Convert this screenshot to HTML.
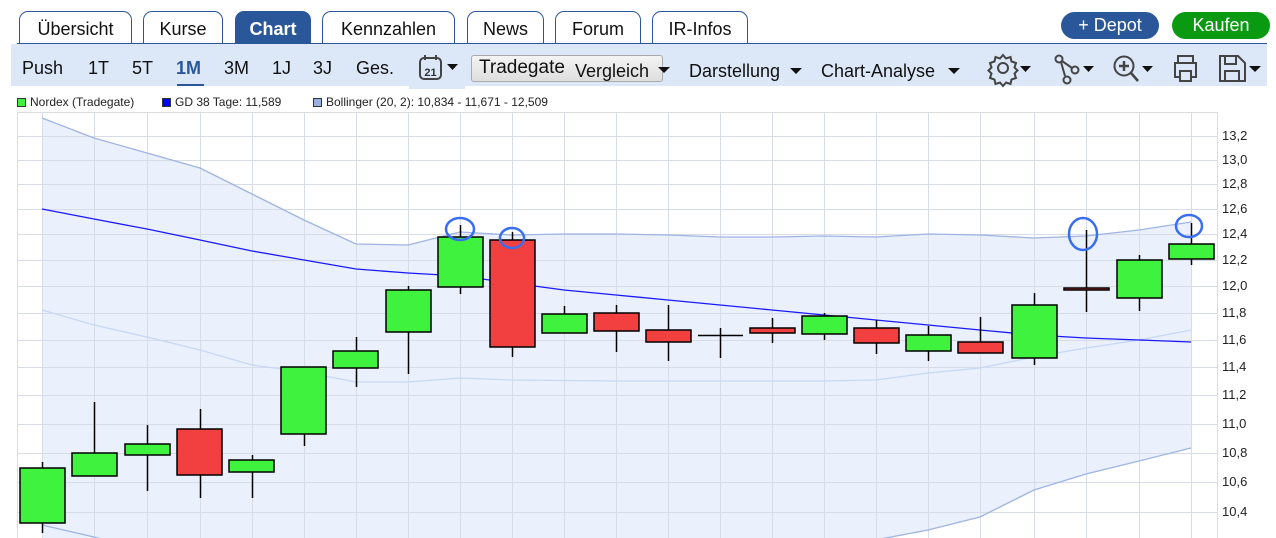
<!DOCTYPE html>
<html><head><meta charset="utf-8"><style>
*{margin:0;padding:0;box-sizing:border-box}
body{width:1276px;height:538px;overflow:hidden;background:#fff;font-family:"Liberation Sans",sans-serif;position:relative;color:#111}
.tab{position:absolute;top:11px;height:33px;border:1px solid #2a579a;border-bottom:none;border-radius:9px 9px 0 0;background:#fff;font-size:18px;text-align:center;line-height:34px}
.tab.act{background:#2a579a;color:#fff;font-weight:bold}
.line{position:absolute;left:17px;right:9px;top:43px;height:1px;background:#2a579a}
.bar{position:absolute;left:11px;right:9px;top:44px;height:42px;background:#dce8f8}
.t{position:absolute;top:58px;font-size:18px}
.btn{position:absolute;top:12px;height:27px;border-radius:14px;color:#fff;font-size:18px;text-align:center;line-height:27px}
.leg{position:absolute;top:95px;font-size:12px;color:#222}
.sq{display:inline-block;width:9px;height:9px;border:1px solid #333;margin-right:4px;vertical-align:-1px}
.ax{position:absolute;left:1222px;font-size:13px;color:#222}
</style></head><body>
<div class="tab" style="left:19px;width:113px">Übersicht</div>
<div class="tab" style="left:143px;width:80px">Kurse</div>
<div class="tab act" style="left:235px;width:76px">Chart</div>
<div class="tab" style="left:322px;width:133px">Kennzahlen</div>
<div class="tab" style="left:467px;width:77px">News</div>
<div class="tab" style="left:555px;width:86px">Forum</div>
<div class="tab" style="left:652px;width:96px">IR-Infos</div>
<div class="btn" style="left:1061px;width:98px;background:#2a579a">+ Depot</div>
<div class="btn" style="left:1172px;width:98px;background:#0a9a12">Kaufen</div>
<div class="line"></div>
<div class="bar"></div>
<div style="position:absolute;left:409px;top:86px;width:56px;height:3px;background:#dce8f8"></div>
<div class="t" style="left:22px">Push</div>
<div class="t" style="left:88px">1T</div>
<div class="t" style="left:132px">5T</div>
<div class="t" style="left:176px;font-weight:bold;color:#2a579a">1M</div>
<div style="position:absolute;left:177px;top:84px;width:27px;height:2px;background:#2a579a"></div>
<div class="t" style="left:224px">3M</div>
<div class="t" style="left:272px">1J</div>
<div class="t" style="left:313px">3J</div>
<div class="t" style="left:356px">Ges.</div>
<svg style="position:absolute;left:418px;top:54px" width="46" height="28"><rect x="2" y="4" width="21" height="21" rx="4" fill="none" stroke="#444" stroke-width="2"/><line x1="7" y1="1" x2="7" y2="6" stroke="#444" stroke-width="2"/><line x1="18" y1="1" x2="18" y2="6" stroke="#444" stroke-width="2"/><text x="12.5" y="22" font-size="11" font-weight="bold" text-anchor="middle" fill="#333" font-family="Liberation Sans">21</text><path d="M29 10h11l-5.5 6z" fill="#111"/></svg>
<div style="position:absolute;left:471px;top:55px;width:192px;height:27px;border:1px solid #aaa;border-radius:3px;background:linear-gradient(#f4f4f4,#dedede)"></div>
<div class="t" style="left:479px;top:57px;font-size:19px">Tradegate</div>
<div class="t" style="left:575px;top:61px;font-size:18px">Vergleich</div>
<svg style="position:absolute;left:657px;top:66px" width="14" height="8"><path d="M1 1h12l-6 6z" fill="#111"/></svg>
<div class="t" style="left:689px;top:61px">Darstellung</div>
<svg style="position:absolute;left:789px;top:67px" width="14" height="8"><path d="M1 1h12l-6 6z" fill="#111"/></svg>
<div class="t" style="left:821px;top:61px">Chart-Analyse</div>
<svg style="position:absolute;left:947px;top:67px" width="14" height="8"><path d="M1 1h12l-6 6z" fill="#111"/></svg>
<svg style="position:absolute;left:0;top:0" width="1276" height="100" fill="none" stroke="#444" stroke-width="2">
<circle cx="1003" cy="68" r="5"/>
<path d="M1003 55l3 3.5 4.5-1.5 1 4.5 4.5 1.5-1.5 4.5 3 3-3 3 1.5 4.5-4.5 1.5-1 4.5-4.5-1.5-3 3.5-3-3.5-4.5 1.5-1-4.5-4.5-1.5 1.5-4.5-3-3 3-3-1.5-4.5 4.5-1.5 1-4.5 4.5 1.5z"/>
<path d="M1020 66h11l-5.5 6z" fill="#111" stroke="none"/>
<circle cx="1059" cy="59" r="3.5"/><circle cx="1075" cy="70" r="3.5"/><circle cx="1067" cy="80" r="3.5"/>
<path d="M1061 62l4 14M1062 61l10 7"/>
<path d="M1083 66h11l-5.5 6z" fill="#111" stroke="none"/>
<circle cx="1124" cy="66" r="9.5"/><path d="M1131 73l7 8" stroke-width="2.5"/><path d="M1124 61v10M1119 66h10" stroke-width="2.5"/>
<path d="M1142 66h11l-5.5 6z" fill="#111" stroke="none"/>
<path d="M1178 63v-7h15v7M1181 77h-6v-14h21v14h-6M1180 71h11v10h-11z"/>
<path d="M1220 56h18l7 7v18h-25zM1225 56v8h11v-8M1225 81v-10h14v10"/>
<path d="M1249 66h12l-6 6z" fill="#111" stroke="none"/>
</svg>
<div class="leg" style="left:17px"><span class="sq" style="background:#3ef23e"></span>Nordex (Tradegate)</div>
<div class="leg" style="left:162px"><span class="sq" style="background:#0000ff"></span>GD 38 Tage: 11,589</div>
<div class="leg" style="left:313px"><span class="sq" style="background:#99b0e0"></span>Bollinger (20, 2): 10,834 - 11,671 - 12,509</div>
<svg style="position:absolute;left:0;top:0" width="1276" height="538">
<g stroke="#dcdcdc" stroke-width="1">
<line x1="17" y1="112.5" x2="1217" y2="112.5"/><line x1="17.5" y1="112" x2="17.5" y2="538"/><line x1="1217.5" y1="112" x2="1217.5" y2="538"/>
</g>
<polygon fill="#eaf0fc" points="42,118 94,138 147,153 200,168 252,194 304,220 356,244 408,245 460,232 512,235 564,234 616,234 668,235 720,237 772,237 824,236 876,237 928,234 980,235 1034,238 1086,236 1139,230 1191,222 1191,448 1139,461 1086,474 1034,490 980,517 928,530 876,540 42,540"/>
<g stroke="#d8dce6" stroke-width="1">
<line x1="17" x2="1217" y1="136.5" y2="136.5"/><line x1="17" x2="1217" y1="160.5" y2="160.5"/><line x1="17" x2="1217" y1="184.5" y2="184.5"/><line x1="17" x2="1217" y1="209.5" y2="209.5"/><line x1="17" x2="1217" y1="234.5" y2="234.5"/><line x1="17" x2="1217" y1="260.5" y2="260.5"/><line x1="17" x2="1217" y1="286.5" y2="286.5"/><line x1="17" x2="1217" y1="313.5" y2="313.5"/><line x1="17" x2="1217" y1="340.5" y2="340.5"/><line x1="17" x2="1217" y1="367.5" y2="367.5"/><line x1="17" x2="1217" y1="395.5" y2="395.5"/><line x1="17" x2="1217" y1="424.5" y2="424.5"/><line x1="17" x2="1217" y1="453.5" y2="453.5"/><line x1="17" x2="1217" y1="482.5" y2="482.5"/><line x1="17" x2="1217" y1="512.5" y2="512.5"/>
<line x1="42.5" x2="42.5" y1="112" y2="538"/><line x1="94.5" x2="94.5" y1="112" y2="538"/><line x1="147.5" x2="147.5" y1="112" y2="538"/><line x1="200.5" x2="200.5" y1="112" y2="538"/><line x1="252.5" x2="252.5" y1="112" y2="538"/><line x1="304.5" x2="304.5" y1="112" y2="538"/><line x1="356.5" x2="356.5" y1="112" y2="538"/><line x1="408.5" x2="408.5" y1="112" y2="538"/><line x1="460.5" x2="460.5" y1="112" y2="538"/><line x1="512.5" x2="512.5" y1="112" y2="538"/><line x1="564.5" x2="564.5" y1="112" y2="538"/><line x1="616.5" x2="616.5" y1="112" y2="538"/><line x1="668.5" x2="668.5" y1="112" y2="538"/><line x1="720.5" x2="720.5" y1="112" y2="538"/><line x1="772.5" x2="772.5" y1="112" y2="538"/><line x1="824.5" x2="824.5" y1="112" y2="538"/><line x1="876.5" x2="876.5" y1="112" y2="538"/><line x1="928.5" x2="928.5" y1="112" y2="538"/><line x1="980.5" x2="980.5" y1="112" y2="538"/><line x1="1034.5" x2="1034.5" y1="112" y2="538"/><line x1="1086.5" x2="1086.5" y1="112" y2="538"/><line x1="1139.5" x2="1139.5" y1="112" y2="538"/><line x1="1191.5" x2="1191.5" y1="112" y2="538"/>
</g>
<polyline fill="none" stroke="#9fb4e2" stroke-width="1.3" points="42,118 94,138 147,153 200,168 252,194 304,220 356,244 408,245 460,232 512,235 564,234 616,234 668,235 720,237 772,237 824,236 876,237 928,234 980,235 1034,238 1086,236 1139,230 1191,222"/>
<polyline fill="none" stroke="#9fb4e2" stroke-width="1.3" points="42,525 94,537 110,541 870,541 928,530 980,517 1034,490 1086,474 1139,461 1191,448"/>
<polyline fill="none" stroke="#c6d8f6" stroke-width="1.3" points="42,310 94,325 147,337 200,350 252,365 304,372 356,382 408,382 460,378 512,380 616,381 720,381 824,381 876,380 928,373 980,368 1034,357 1086,348 1139,340 1191,330"/>
<polyline fill="none" stroke="#1a1aff" stroke-width="1.3" points="42,209 94,219 147,229 200,240 252,251 304,260 356,269 408,273 460,276 512,283 564,290 616,295 668,300 720,305 772,310 824,315 876,320 928,325 980,330 1034,335 1086,338 1139,340 1191,342"/>
<g stroke="#000" stroke-width="1.5">
<line x1="42.5" y1="462" x2="42.5" y2="533"/><rect x="20" y="468" width="45" height="55" fill="#3ef23e"/>
<line x1="94.5" y1="402" x2="94.5" y2="476"/><rect x="72" y="453" width="45" height="23" fill="#3ef23e"/>
<line x1="147.5" y1="425" x2="147.5" y2="491"/><rect x="125" y="444" width="45" height="11" fill="#3ef23e"/>
<line x1="200.5" y1="409" x2="200.5" y2="498"/><rect x="177" y="429" width="45" height="46" fill="#f24040"/>
<line x1="252.5" y1="455" x2="252.5" y2="498"/><rect x="229" y="460" width="45" height="12" fill="#3ef23e"/>
<line x1="304.5" y1="367" x2="304.5" y2="446"/><rect x="281" y="367" width="45" height="67" fill="#3ef23e"/>
<line x1="356.5" y1="337" x2="356.5" y2="387"/><rect x="333" y="351" width="45" height="17" fill="#3ef23e"/>
<line x1="408.5" y1="286" x2="408.5" y2="374"/><rect x="386" y="290" width="45" height="42" fill="#3ef23e"/>
<line x1="460.5" y1="225" x2="460.5" y2="294"/><rect x="438" y="237" width="45" height="50" fill="#3ef23e"/>
<line x1="512.5" y1="232" x2="512.5" y2="357"/><rect x="490" y="240" width="45" height="107" fill="#f24040"/>
<line x1="564.5" y1="306" x2="564.5" y2="333"/><rect x="542" y="314" width="45" height="19" fill="#3ef23e"/>
<line x1="616.5" y1="305" x2="616.5" y2="352"/><rect x="594" y="313" width="45" height="18" fill="#f24040"/>
<line x1="668.5" y1="305" x2="668.5" y2="361"/><rect x="646" y="330" width="45" height="12" fill="#f24040"/>
<line x1="720.5" y1="328" x2="720.5" y2="358"/><line x1="698" y1="335.5" x2="743" y2="335.5"/>
<line x1="772.5" y1="318" x2="772.5" y2="343"/><rect x="750" y="328" width="45" height="5" fill="#f24040"/>
<line x1="824.5" y1="313" x2="824.5" y2="340"/><rect x="802" y="316" width="45" height="18" fill="#3ef23e"/>
<line x1="876.5" y1="320" x2="876.5" y2="354"/><rect x="854" y="328" width="45" height="15" fill="#f24040"/>
<line x1="928.5" y1="326" x2="928.5" y2="361"/><rect x="906" y="335" width="45" height="16" fill="#3ef23e"/>
<line x1="980.5" y1="317" x2="980.5" y2="353"/><rect x="958" y="342" width="45" height="11" fill="#f24040"/>
<line x1="1034.5" y1="293" x2="1034.5" y2="365"/><rect x="1012" y="305" width="45" height="53" fill="#3ef23e"/>
<line x1="1086.5" y1="230" x2="1086.5" y2="312"/><rect x="1064" y="288" width="45" height="2" fill="#f24040"/>
<line x1="1139.5" y1="255" x2="1139.5" y2="311"/><rect x="1117" y="260" width="45" height="38" fill="#3ef23e"/>
<line x1="1191.5" y1="223" x2="1191.5" y2="265"/><rect x="1169" y="244" width="45" height="15" fill="#3ef23e"/>
</g>
<g fill="none" stroke="#3a6ef0" stroke-width="2.5">
<ellipse cx="460" cy="229" rx="14" ry="11"/><ellipse cx="512" cy="238" rx="12" ry="10"/><ellipse cx="1083" cy="234" rx="14" ry="16"/><ellipse cx="1189" cy="226" rx="13" ry="11"/>
</g>
</svg>
<div class="ax" style="top:128px">13,2</div><div class="ax" style="top:152px">13,0</div><div class="ax" style="top:176px">12,8</div><div class="ax" style="top:201px">12,6</div><div class="ax" style="top:226px">12,4</div><div class="ax" style="top:252px">12,2</div><div class="ax" style="top:278px">12,0</div><div class="ax" style="top:305px">11,8</div><div class="ax" style="top:332px">11,6</div><div class="ax" style="top:359px">11,4</div><div class="ax" style="top:387px">11,2</div><div class="ax" style="top:416px">11,0</div><div class="ax" style="top:445px">10,8</div><div class="ax" style="top:474px">10,6</div><div class="ax" style="top:504px">10,4</div>
</body></html>
